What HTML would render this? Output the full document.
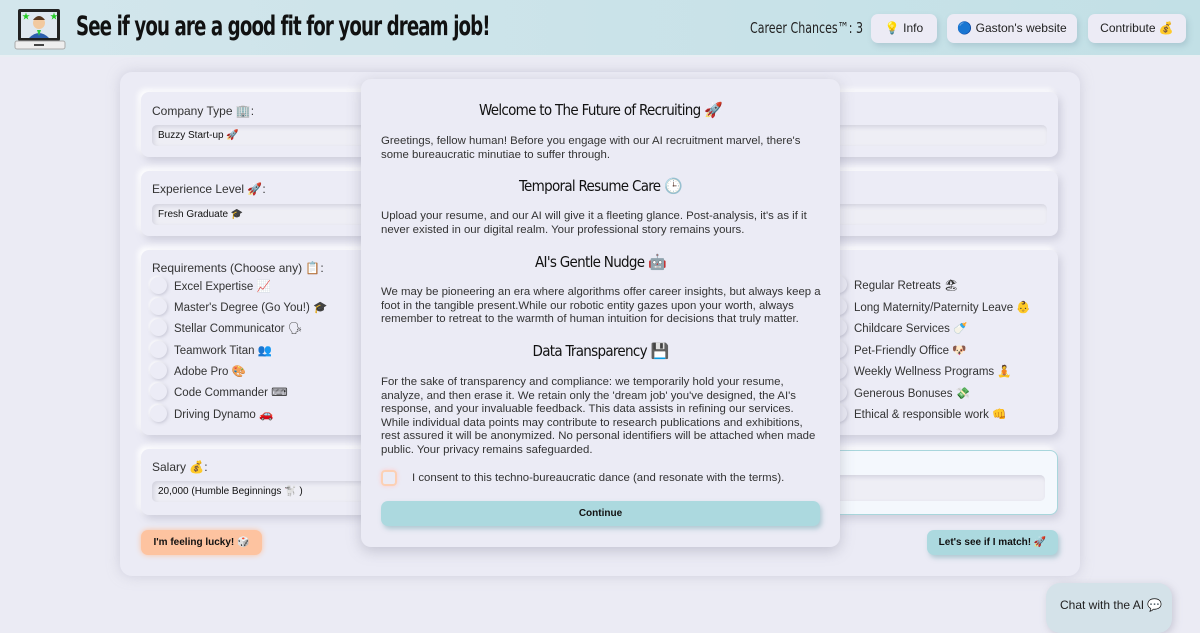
<!DOCTYPE html>
<html><head><meta charset="utf-8"><style>
*{box-sizing:border-box;margin:0;padding:0}
body{width:1200px;height:626px;overflow:hidden;background:#ebebf4;font-family:"Liberation Sans","Noto Sans CJK JP",sans-serif;color:#222;position:relative}
.hdr{position:absolute;left:0;top:0;width:1200px;height:57px;background:linear-gradient(90deg,#d3e6ec,#c2e0e6);border-bottom:2px solid #e8eef3}
.title{position:absolute;left:76px;top:11px;font-family:"DejaVu Sans Condensed","Liberation Sans Narrow",sans-serif;font-weight:bold;font-size:27px;letter-spacing:-1.2px;color:#111;transform:scaleX(.75);transform-origin:left;white-space:nowrap}
.cc{position:absolute;left:750px;top:19px;font-family:"DejaVu Sans Condensed",sans-serif;font-size:15px;color:#222;transform:scaleX(.82);transform-origin:left;white-space:nowrap}
.hb{position:absolute;top:14px;height:29px;background:#ecebf5;border-radius:7px;font-size:12px;line-height:29px;text-align:center;box-shadow:2px 3px 6px rgba(100,130,150,.25)}
.panel{position:absolute;left:120px;top:72px;width:960px;height:504px;background:#ebebf5;border-radius:12px;box-shadow:0 0 12px rgba(180,180,200,.5)}
.card{position:absolute;background:#ececf6;border-radius:8px;box-shadow:3px 4px 8px rgba(170,170,190,.45),-3px -3px 6px #fff}
.lbl{position:absolute;left:11px;font-size:12px;color:#333}
.inp{position:absolute;left:11px;height:21px;background:#eeeef5;border-radius:5px;box-shadow:inset 2px 2px 4px rgba(160,160,180,.35);font-size:10px;line-height:21px;padding-left:6px;color:#111}
.item{position:absolute;font-size:11.5px;color:#333;white-space:nowrap}
.item:before{content:"";position:absolute;left:-24px;top:-2px;width:17px;height:17px;border-radius:50%;background:#ececf6;box-shadow:1px 1px 3px rgba(160,160,180,.5),-1px -1px 2px #fff}
.modal{position:absolute;left:361px;top:79px;width:479px;height:468px;background:#ebebf5;border-radius:10px;box-shadow:0 4px 14px rgba(120,120,140,.35)}
.modal h3{position:absolute;left:0;width:479px;text-align:center;font-family:"DejaVu Sans Condensed",sans-serif;font-weight:normal;font-size:15px;color:#111;letter-spacing:-.7px}
.modal p{position:absolute;left:20px;width:440px;font-size:11.4px;line-height:13.5px;color:#333}
.btn{position:absolute;height:25px;border-radius:7px;font-size:10px;font-weight:bold;line-height:25px;text-align:center;color:#111}
</style></head><body>
<div class="hdr">
<svg style="position:absolute;left:14px;top:7px" width="52" height="44" viewBox="0 0 52 44"><rect x="4" y="2" width="42" height="32" rx="2" fill="#222"/><rect x="7" y="5" width="36" height="26" fill="#dfe8f0"/><rect x="1" y="34" width="50" height="8" rx="2" fill="#eee" stroke="#aaa"/><rect x="20" y="37" width="10" height="2" fill="#444"/><circle cx="25" cy="16" r="6" fill="#f2c9a0"/><path d="M19 13q6-8 12 0" fill="#5a3920"/><path d="M15 31q10-10 20 0z" fill="#2d5fae"/><path d="M23 23h4l-2 6z" fill="#2ecc40"/><text x="8" y="12" font-size="8" fill="#2c2">★</text><text x="36" y="12" font-size="8" fill="#2c2">★</text></svg>
<div class="title">See if you are a good fit for your dream job!</div>
<div class="cc">Career Chances™: 3</div>
<div class="hb" style="left:871px;width:66px">💡 Info</div>
<div class="hb" style="left:947px;width:130px">🔵 Gaston's website</div>
<div class="hb" style="left:1088px;width:98px">Contribute 💰</div>
</div>
<div class="panel"></div>
<div class="card" style="left:141px;top:92px;width:917px;height:65px"><div class="lbl" style="top:12px">Company Type 🏢:</div><div class="inp" style="top:33px;width:895px">Buzzy Start-up 🚀</div></div>
<div class="card" style="left:141px;top:171px;width:917px;height:65px"><div class="lbl" style="top:11px">Experience Level 🚀:</div><div class="inp" style="top:33px;width:895px">Fresh Graduate 🎓</div></div>
<div class="card" style="left:141px;top:250px;width:250px;height:185px"><div class="lbl" style="top:11px">Requirements (Choose any) 📋:</div></div>
<div class="card" style="left:820px;top:250px;width:238px;height:185px"></div>
<div class="item" style="left:174px;top:279px">Excel Expertise 📈</div>
<div class="item" style="left:174px;top:300px">Master's Degree (Go You!) 🎓</div>
<div class="item" style="left:174px;top:321px">Stellar Communicator 🗣</div>
<div class="item" style="left:174px;top:343px">Teamwork Titan 👥</div>
<div class="item" style="left:174px;top:364px">Adobe Pro 🎨</div>
<div class="item" style="left:174px;top:385px">Code Commander ⌨</div>
<div class="item" style="left:174px;top:407px">Driving Dynamo 🚗</div>
<div class="item" style="left:854px;top:278px">Regular Retreats 🏖</div>
<div class="item" style="left:854px;top:300px">Long Maternity/Paternity Leave 👶</div>
<div class="item" style="left:854px;top:321px">Childcare Services 🍼</div>
<div class="item" style="left:854px;top:343px">Pet-Friendly Office 🐶</div>
<div class="item" style="left:854px;top:364px">Weekly Wellness Programs 🧘</div>
<div class="item" style="left:854px;top:386px">Generous Bonuses 💸</div>
<div class="item" style="left:854px;top:407px">Ethical &amp; responsible work 👊</div>
<div class="card" style="left:141px;top:449px;width:250px;height:66px"><div class="lbl" style="top:11px">Salary 💰:</div><div class="inp" style="top:32px;width:230px">20,000 (Humble Beginnings 🐩 )</div></div>
<div class="card" style="left:800px;top:450px;width:258px;height:65px;background:#f4f8fd;border:1px solid #a8d6dc"><div class="inp" style="top:24px;left:20px;width:224px;height:26px"></div></div>
<div class="btn" style="left:141px;top:530px;width:121px;background:#fdc3a0;box-shadow:0 0 6px #fdc3a0">I'm feeling lucky! 🎲</div>
<div class="btn" style="left:927px;top:530px;width:131px;background:#acd9df;box-shadow:2px 3px 5px rgba(120,170,180,.5)">Let's see if I match! 🚀</div>
<div style="position:absolute;left:1046px;top:583px;width:126px;height:50px;background:#d4e2e9;border-radius:14px;font-size:12px;padding:15px 0 0 14px;box-shadow:2px 2px 8px rgba(150,150,170,.4)">Chat with the AI 💬</div>
<div class="modal">
<h3 style="top:22px">Welcome to The Future of Recruiting 🚀</h3>
<p style="top:56px">Greetings, fellow human! Before you engage with our AI recruitment marvel, there's some bureaucratic minutiae to suffer through.</p>
<h3 style="top:98px">Temporal Resume Care 🕒</h3>
<p style="top:131px">Upload your resume, and our AI will give it a fleeting glance. Post-analysis, it's as if it never existed in our digital realm. Your professional story remains yours.</p>
<h3 style="top:174px">AI's Gentle Nudge 🤖</h3>
<p style="top:207px">We may be pioneering an era where algorithms offer career insights, but always keep a foot in the tangible present.While our robotic entity gazes upon your worth, always remember to retreat to the warmth of human intuition for decisions that truly matter.</p>
<h3 style="top:263px">Data Transparency 💾</h3>
<p style="top:297px">For the sake of transparency and compliance: we temporarily hold your resume, analyze, and then erase it. We retain only the 'dream job' you've designed, the AI's response, and your invaluable feedback. This data assists in refining our services. While individual data points may contribute to research publications and exhibitions, rest assured it will be anonymized. No personal identifiers will be attached when made public. Your privacy remains safeguarded.</p>
<div style="position:absolute;left:20px;top:391px;width:16px;height:16px;border-radius:4px;border:2px solid #fcd0b4;box-shadow:0 0 4px #fcc"></div>
<p style="top:393px;left:51px;width:420px">I consent to this techno-bureaucratic dance (and resonate with the terms).</p>
<div class="btn" style="left:20px;top:422px;width:439px;background:#acd9df;box-shadow:2px 3px 5px rgba(120,170,180,.5)">Continue</div>
</div>
</body></html>
